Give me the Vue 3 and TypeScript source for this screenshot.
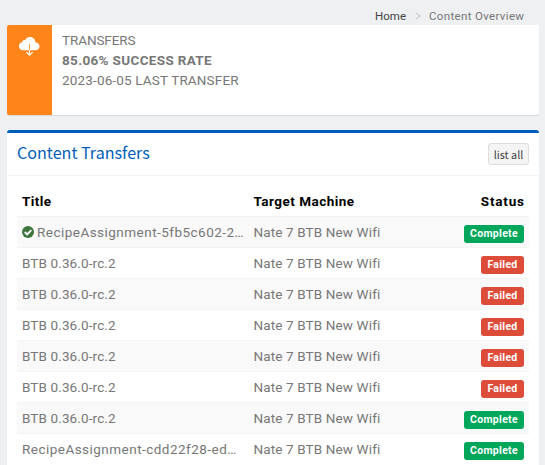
<script setup lang="ts">
type Status = 'Complete' | 'Failed'

interface Transfer {
  title: string
  machine: string
  status: Status
  verified?: boolean
}

const machine = 'Nate 7 BTB New Wifi'
const failed: Transfer = { title: 'BTB 0.36.0-rc.2', machine, status: 'Failed' }

const transfers: Transfer[] = [
  { title: 'RecipeAssignment-5fb5c602-2…', machine, status: 'Complete', verified: true },
  { ...failed },
  { ...failed },
  { ...failed },
  { ...failed },
  { ...failed },
  { title: 'BTB 0.36.0-rc.2', machine, status: 'Complete' },
  { title: 'RecipeAssignment-cdd22f28-ed…', machine, status: 'Complete' },
]
</script>

<template>
  <main class="page">
    <nav class="breadcrumb">
      <a class="home">Home</a>
      <svg class="sep" width="6" height="8" viewBox="0 0 6 8"><path d="M.8 1 5 4 .8 7" /></svg>
      <span class="current">Content Overview</span>
    </nav>

    <section class="info-box">
      <div class="info-icon">
        <svg width="22" height="20" viewBox="0 0 22 20">
          <path class="cloud" d="M5 14.2C2.5 14.2.9 12.5.9 10.2.9 8.100 2.200 6.600 4 6.200 4.500 4.400 6 3.700 7.200 4.200 8 2.200 9.700 1 12 1c3.100 0 5.300 2.200 5.400 5.200 2.300.2 4.100 1.700 4.100 4 0 2.400-1.700 4-4.200 4Z" />
          <path class="stem" d="M11.500 8v6" />
          <path class="arrow" d="M11.500 14v5M8.300 16.100l3.200 3 3.200-3" />
        </svg>
      </div>
      <div class="info-content">
        <div class="label">TRANSFERS</div>
        <div class="rate">85.06% SUCCESS RATE</div>
        <div class="last">2023-06-05 LAST TRANSFER</div>
      </div>
    </section>

    <section class="box">
      <header class="box-header">
        <h3>Content Transfers</h3>
        <button type="button">list all</button>
      </header>
      <div class="box-body">
        <div class="row head">
          <span class="h-title">Title</span>
          <span class="h-machine">Target Machine</span>
          <span class="h-status">Status</span>
        </div>
        <div v-for="(t, i) in transfers" :key="i" class="row item">
          <div class="title" :class="{ long: t.title.length > 20 }">
            <svg v-if="t.verified" class="check" width="12" height="12" viewBox="0 0 12 12">
              <circle cx="6" cy="6" r="6" />
              <path d="m2.800 6 2.300 2.300 4.200-4.200" />
            </svg>
            <span>{{ t.title }}</span>
          </div>
          <div class="machine">{{ t.machine }}</div>
          <div class="status">
            <span class="badge" :class="t.status.toLowerCase()">{{ t.status }}</span>
          </div>
        </div>
      </div>
    </section>
  </main>
</template>

<style>
body {
  margin: 0;
  background: #eff0f2;
  overflow: hidden;
}
</style>

<style scoped>
.page {
  box-sizing: border-box;
  height: 465px;
  overflow: hidden;
  padding: 7px 6px 0 7px;
  font-family: Roboto, "Liberation Sans", sans-serif;
  font-size: 13.5px;
  line-height: 20px;
  color: #777;
  white-space: nowrap;
}
.breadcrumb {
  display: flex;
  justify-content: flex-end;
  align-items: center;
  height: 18px;
  padding-right: 15px;
  font-size: 11.5px;
}
.home { color: #444; }
.sep { margin: 0 8px 0 9px; fill: none; stroke: #ccc; stroke-width: 1.2; }
.current { letter-spacing: 0.34px; margin-right: -0.34px; }

.info-box {
  display: flex;
  height: 90px;
  margin-bottom: 15px;
  overflow: hidden;
  background: #fff;
  border-radius: 2px;
  box-shadow: 0 1px 1px rgba(0, 0, 0, 0.1);
}
.info-icon {
  box-sizing: border-box;
  width: 45px;
  padding: 11px 0 0 11px;
  background: #ff851b;
}
.info-icon svg { display: block; }
.cloud { fill: #fff; }
.stem { stroke: #ff9d49; }
.arrow { fill: none; stroke: #fff; stroke-width: 1.200; }
.info-content { padding: 5px 10px; }
.label { letter-spacing: -0.1px; }
.rate { font-weight: 700; letter-spacing: 0.34px; }
.last { letter-spacing: 0.16px; }

.box {
  background: #fff;
  border-top: 3px solid #005eb8;
  border-radius: 3px;
  box-shadow: 0 1px 1px rgba(0, 0, 0, 0.1);
}
.box-header {
  display: flex;
  align-items: center;
  justify-content: space-between;
  height: 42px;
  padding: 0 10px;
  border-bottom: 1px solid #f4f4f4;
}
h3 {
  margin: 0 0 5px;
  font-family: "Noto Sans CJK JP", "Noto Sans", sans-serif;
  font-size: 16.1px;
  font-weight: 400;
  line-height: 22px;
  color: #005eb8;
}
button {
  box-sizing: border-box;
  width: 41px;
  height: 22px;
  padding: 0;
  font-family: "Noto Sans CJK JP", "Noto Sans", sans-serif;
  font-size: 10.8px;
  line-height: 18px;
  color: #444;
  background: #f4f4f4;
  border: 1px solid #ddd;
  border-radius: 3px;
}
.box-body { padding: 10px; }
.row {
  display: grid;
  grid-template-columns: 231.5px 1fr 80px;
  box-sizing: border-box;
  height: 31px;
  padding: 0 5px;
  line-height: 31px;
}
.head { height: 30px; font-weight: 700; color: #000; }
.h-title { letter-spacing: 0.4px; }
.h-machine { letter-spacing: 0.48px; }
.h-status { text-align: right; letter-spacing: 0.8px; margin-right: -0.8px; }
.item { border-top: 1px solid #f4f4f4; }
.item:nth-child(even) { background: #f9f9f9; }
.title { display: flex; align-items: center; height: 31px; letter-spacing: 0.12px; }
.long { letter-spacing: 0.47px; }
.machine { letter-spacing: 0.13px; }
.check { margin: 0 3px 1px 0; fill: #3c763d; }
.check path { fill: none; stroke: #fff; stroke-width: 1.900; }
.status { display: flex; justify-content: flex-end; padding-top: 8px; }
.badge {
  box-sizing: border-box;
  height: 18px;
  border-radius: 3px;
  font-size: 10.5px;
  font-weight: 700;
  letter-spacing: 0.3px;
  line-height: 18px;
  text-align: center;
  color: #fff;
}
.complete { width: 60px; background: #00a65a; }
.failed { width: 43px; background: #dd4b39; }
</style>
